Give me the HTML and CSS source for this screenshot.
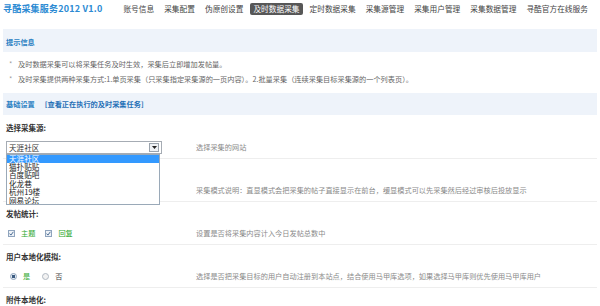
FILE: index.html
```html
<!DOCTYPE html>
<html lang="zh-CN">
<head>
    <meta charset="UTF-8">
    <title>寻酷采集服务2012 V1.0</title>
    <link rel="stylesheet" href="styles.css">
</head>
<body>
    <div class="header">
        <div class="logo">寻酷采集服务2012 V1.0</div>
        <ul class="nav">
            <li>账号信息</li>
            <li>采集配置</li>
            <li>伪原创设置</li>
            <li class="active">及时数据采集</li>
            <li>定时数据采集</li>
            <li>采集源管理</li>
            <li>采集用户管理</li>
            <li>采集数据管理</li>
            <li>寻酷官方在线服务</li>
        </ul>
    </div>

    <div class="main">
        <div class="bar bar-tip"><span class="bar-title">提示信息</span></div>
        <ul class="tips">
            <li>及时数据采集可以将采集任务及时生效，采集后立即增加发帖量。</li>
            <li>及时采集提供两种采集方式:1.单页采集（只采集指定采集源的一页内容）。2.批量采集（连续采集目标采集源的一个列表页）。</li>
        </ul>

        <div class="bar">
            <span class="bar-title">基础设置</span>
            <a class="bar-link" href="#">[查看正在执行的及时采集任务]</a>
        </div>

        <div class="form">
            <div class="field">
                <div class="field-label">选择采集源:</div>
                <div class="field-row">
                    <div class="field-control">
                        <div class="select">
                            <span class="select-value">天涯社区</span>
                            <span class="select-btn">
                                <svg width="5" height="3" viewBox="0 0 5 3"><path d="M0 0h5L2.5 3z" fill="#222"/></svg>
                            </span>
                            <ul class="select-list">
                                <li class="selected">天涯社区</li>
                                <li>猫扑贴贴</li>
                                <li>百度贴吧</li>
                                <li>化龙巷</li>
                                <li>杭州19楼</li>
                                <li>网易论坛</li>
                            </ul>
                        </div>
                    </div>
                    <div class="field-desc">选择采集的网站</div>
                </div>
            </div>

            <!-- label and options of this field sit under the open list -->
            <div class="field">
                <div class="field-label"></div>
                <div class="field-row">
                    <div class="field-control"></div>
                    <div class="field-desc">采集模式说明：直显模式会把采集的帖子直接显示在前台，缓显模式可以先采集然后经过审核后投放显示</div>
                </div>
            </div>

            <div class="field">
                <div class="field-label">发帖统计:</div>
                <div class="field-row">
                    <div class="field-control">
                        <span class="check"><svg width="5" height="5" viewBox="0 0 5 5"><path d="M0.6 2.6l1.3 1.5L4.4 0.8" fill="none" stroke="#3a5f8a" stroke-width="0.9"/></svg></span><span class="opt-on">主题</span>
                        <span class="check"><svg width="5" height="5" viewBox="0 0 5 5"><path d="M0.6 2.6l1.3 1.5L4.4 0.8" fill="none" stroke="#3a5f8a" stroke-width="0.9"/></svg></span><span class="opt-on">回复</span>
                    </div>
                    <div class="field-desc">设置是否将采集内容计入今日发帖总数中</div>
                </div>
            </div>

            <div class="field">
                <div class="field-label">用户本地化模拟:</div>
                <div class="field-row">
                    <div class="field-control">
                        <span class="radio on"></span><span class="opt-on">是</span>
                        <span class="radio"></span><span>否</span>
                    </div>
                    <div class="field-desc">选择是否把采集目标的用户自动注册到本站点，结合使用马甲库选项，如果选择马甲库则优先使用马甲库用户</div>
                </div>
            </div>

            <div class="field">
                <div class="field-label">附件本地化:</div>
            </div>
        </div>
    </div>
</body>
</html>
```

FILE: styles.css
```css
body {
    margin: 0;
    background: #fff;
    color: #555;
    font-family: "Noto Sans CJK SC", "Liberation Sans", sans-serif;
    font-size: 7.2px;
    overflow: hidden;
}

ul {
    margin: 0;
    padding: 0;
    list-style: none;
}

.header {
    display: flex;
    align-items: flex-start;
    height: 29px;
    padding: 3px 0 0 3px;
    box-sizing: border-box;
}

.logo {
    color: #2b8ad3;
    font-size: 9px;
    font-weight: bold;
    line-height: 12px;
    letter-spacing: 0.2px;
}

.nav {
    display: flex;
    margin-left: 16px;
}

.nav li {
    padding: 0 5px;
    font-size: 7.7px;
    line-height: 12px;
    color: #444;
}

.nav li.active {
    background: #575757;
    color: #fff;
    border-radius: 2px;
    line-height: 11px;
    padding: 0 3px;
    margin: 0 2px;
}

.main {
    margin: 0 3px;
}

.bar {
    height: 22px;
    background: #eef3fa;
    padding-left: 3px;
    display: flex;
    align-items: center;
    gap: 10px;
}

.bar-tip {
    height: 23px;
    padding-top: 3px;
    box-sizing: border-box;
}

.bar-title {
    color: #2a7fc2;
    font-weight: bold;
}

.bar-link {
    color: #1f6fb6;
    font-weight: bold;
    text-decoration: none;
}

.tips {
    padding: 5px 0 6px 6px;
}

.tips li {
    line-height: 15px;
    color: #666;
}

.tips li::before {
    content: "*";
    display: inline-block;
    width: 9px;
    color: #999;
}

.form {
    padding-top: 1px;
}

.field {
    padding: 6px 0 5px 3px;
    border-bottom: 1px solid #eee;
}

.field:last-child {
    border-bottom: none;
}

.field-label {
    color: #333;
    font-weight: bold;
    font-size: 7.5px;
    line-height: 12px;
    height: 12px;
}

.field-row {
    display: flex;
    align-items: center;
    height: 12px;
    margin-top: 7px;
}

.field-control {
    width: 190px;
    flex-shrink: 0;
    display: flex;
    align-items: center;
    color: #444;
}

.field-desc {
    color: #8a8a8a;
}

.opt-on {
    color: #2ea82e;
    margin-right: 8px;
}

.check {
    display: inline-flex;
    align-items: center;
    justify-content: center;
    width: 5px;
    height: 5px;
    border: 1px solid #8fa4bd;
    background: #eef2f7;
    margin: 0 6px 0 2px;
}

.radio {
    display: inline-block;
    width: 5px;
    height: 5px;
    border: 1px solid #b0b8c2;
    border-radius: 50%;
    background: #f2f2f2;
    margin: 0 6px 0 4px;
}

.radio.on {
    background: radial-gradient(circle, #3b5b80 0 1.5px, #e6ecf3 2px);
    border-color: #8fa4bd;
}

.select {
    position: relative;
    width: 152px;
    height: 11px;
    border: 1px solid #a6acb4;
    display: flex;
    align-items: center;
    justify-content: space-between;
    padding-left: 2px;
    color: #333;
    font-size: 7.6px;
    background: #fff;
}

.select-btn {
    display: flex;
    align-items: center;
    justify-content: center;
    width: 8px;
    height: 7px;
    border: 1px solid #9aa3ad;
    background: #eef1f5;
    margin-right: 2px;
}

.select-list {
    position: absolute;
    top: 12px;
    left: -1px;
    width: 152px;
    height: 49px;
    overflow: hidden;
    border: 1px solid #9aa9b8;
    background: #fff;
    z-index: 2;
}

.select-list li {
    line-height: 8.4px;
    font-size: 7.6px;
    padding-left: 2px;
    color: #222;
}

.select-list li.selected {
    background: #3399ff;
    color: #fff;
}
```
